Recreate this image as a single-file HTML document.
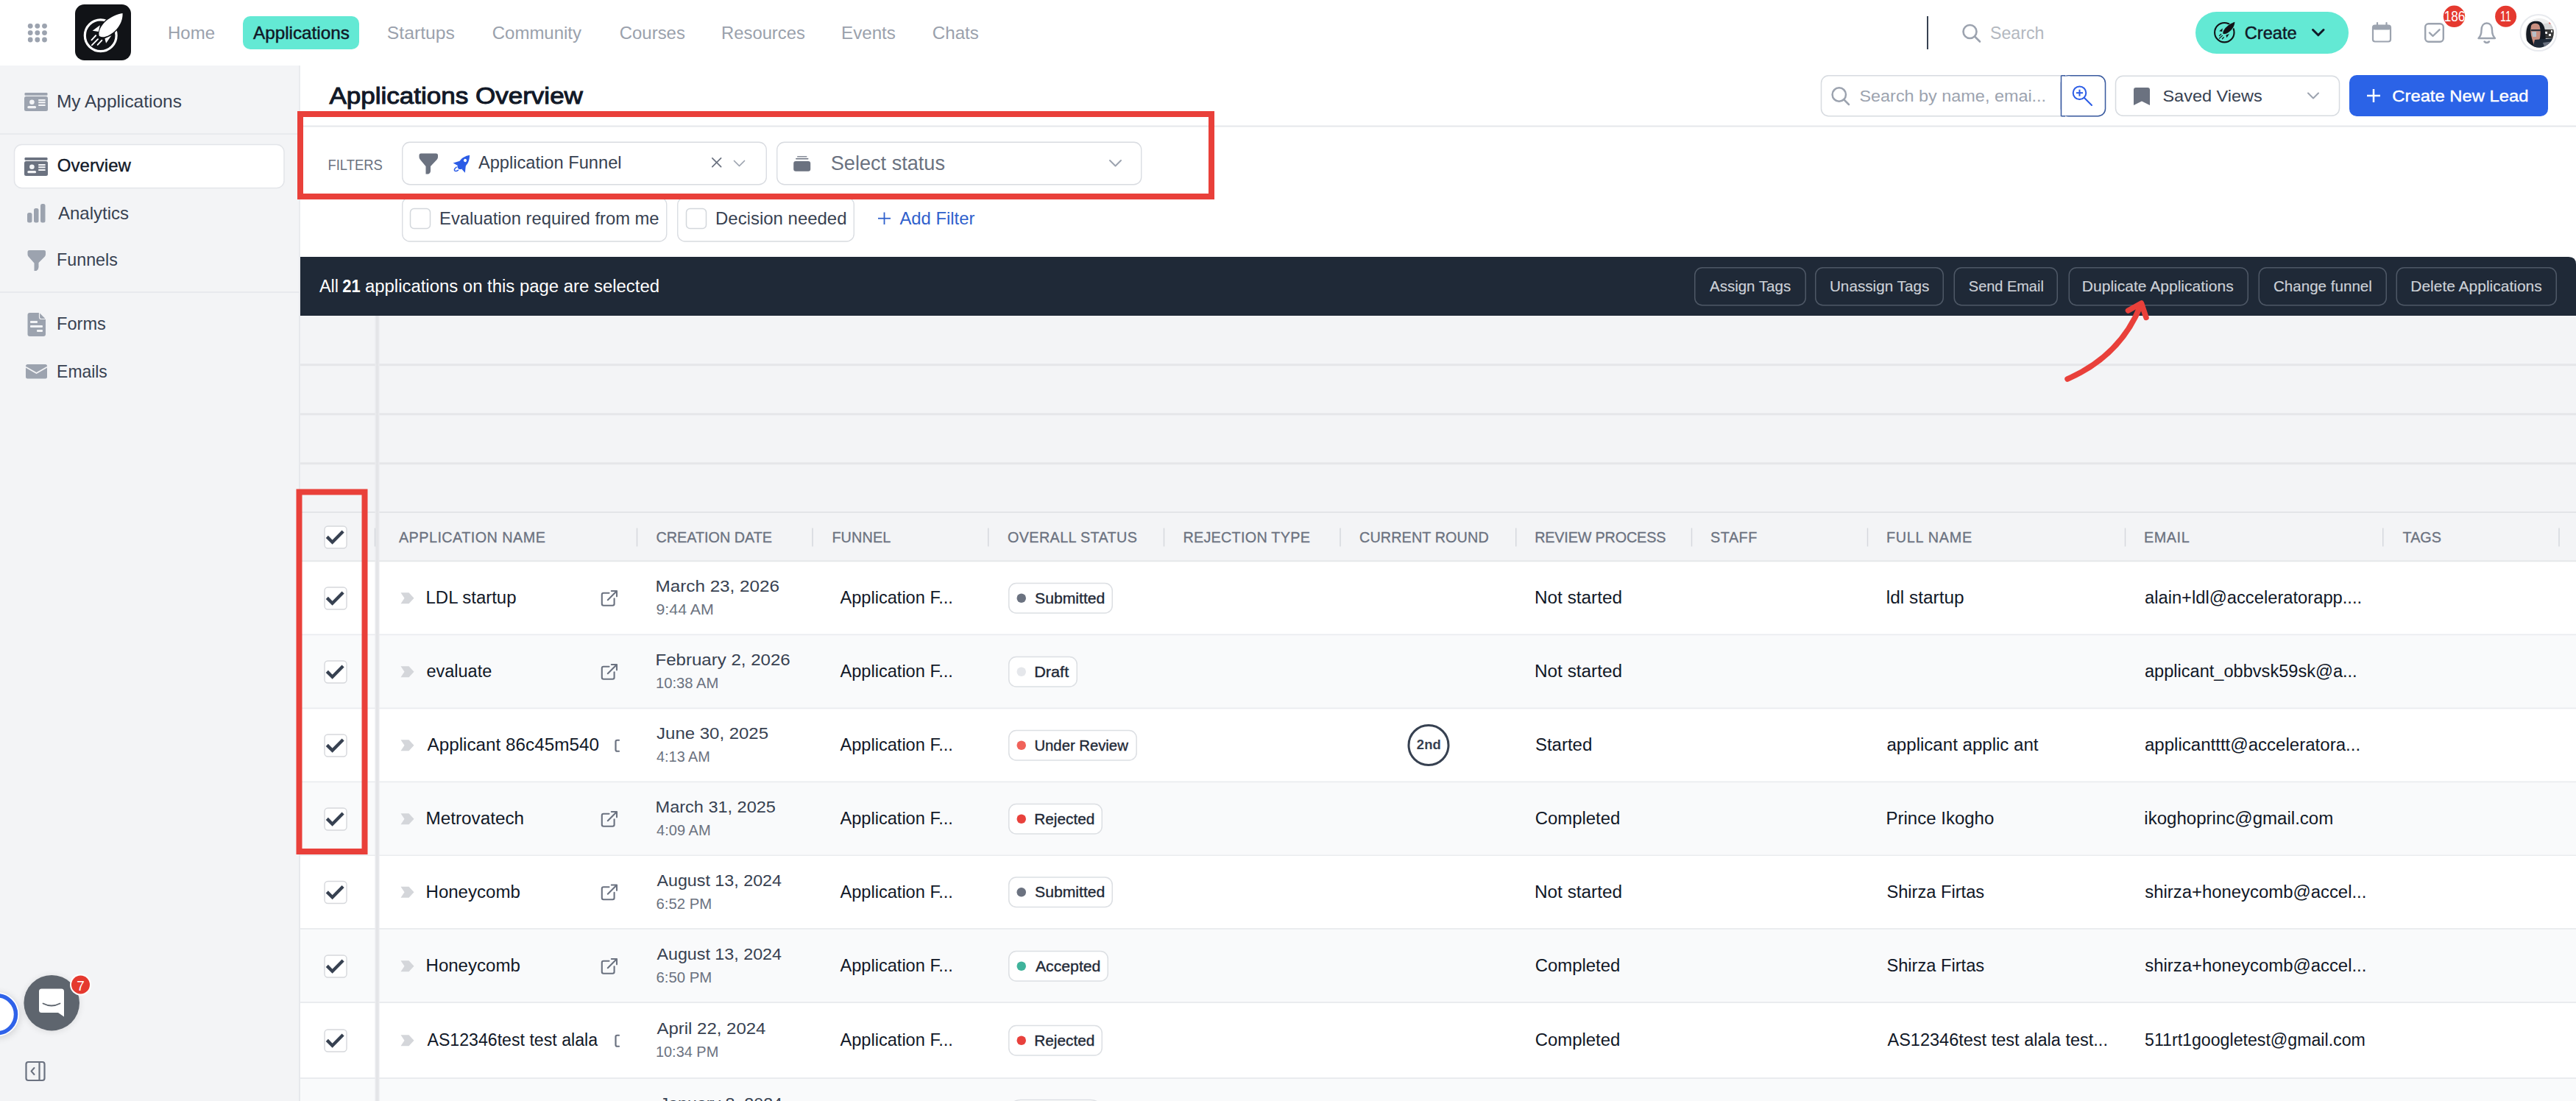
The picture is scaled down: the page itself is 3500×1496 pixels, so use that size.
<!DOCTYPE html>
<html><head><meta charset="utf-8"><title>Applications Overview</title>
<style>
html,body{margin:0;padding:0;background:#ffffff;width:3500px;height:1496px;overflow:hidden}
svg{display:block}
text{font-family:"Liberation Sans",sans-serif;white-space:pre}
</style></head><body>
<svg width="3500" height="1496" viewBox="0 0 3500 1496">
<rect x="0.00" y="0.00" width="3500.00" height="1496.00" fill="#ffffff"/>
<rect x="0.00" y="89.00" width="407.50" height="1407.00" fill="#f3f4f6"/>
<line x1="407.00" y1="89.00" x2="407.00" y2="1496.00" stroke="#e5e7eb" stroke-width="1.50" stroke-linecap="butt"/>
<line x1="408.00" y1="171.50" x2="3500.00" y2="171.50" stroke="#e5e7eb" stroke-width="2.00" stroke-linecap="butt"/>
<circle cx="41.20" cy="35.30" r="3.40" fill="#9ca3af"/>
<circle cx="41.20" cy="44.60" r="3.40" fill="#9ca3af"/>
<circle cx="41.20" cy="54.00" r="3.40" fill="#9ca3af"/>
<circle cx="50.80" cy="35.30" r="3.40" fill="#9ca3af"/>
<circle cx="50.80" cy="44.60" r="3.40" fill="#9ca3af"/>
<circle cx="50.80" cy="54.00" r="3.40" fill="#9ca3af"/>
<circle cx="60.50" cy="35.30" r="3.40" fill="#9ca3af"/>
<circle cx="60.50" cy="44.60" r="3.40" fill="#9ca3af"/>
<circle cx="60.50" cy="54.00" r="3.40" fill="#9ca3af"/>
<rect x="102.00" y="6.00" width="76.00" height="76.00" rx="12.50" fill="#111317"/>
<circle cx="136.70" cy="48.20" r="21.40" fill="none" stroke="#ffffff" stroke-width="3.20"/>
<path d="M134.66,48.24 C133.43,42.52 137.52,34.34 144.06,28.62 C150.60,22.89 159.60,18.81 166.55,17.99 C166.95,24.53 164.50,32.71 158.78,39.25 C152.24,46.61 144.06,50.70 139.15,50.29 C136.29,50.04 135.07,49.06 134.66,48.24 Z" fill="#ffffff" stroke="#111317" stroke-width="3.2" stroke-linejoin="round"/>
<path d="M134.66,48.24 C133.43,42.52 137.52,34.34 144.06,28.62 C150.60,22.89 159.60,18.81 166.55,17.99 C166.95,24.53 164.50,32.71 158.78,39.25 C152.24,46.61 144.06,50.70 139.15,50.29 C136.29,50.04 135.07,49.06 134.66,48.24 Z" fill="#ffffff"/>
<path d="M125.66,41.70 L135.88,34.34 L133.84,42.93 Z" fill="#ffffff"/>
<path d="M142.42,52.33 L151.42,48.24 L144.06,58.87 Z" fill="#ffffff"/>
<path d="M124.44,54.37 L130.16,48.24" fill="none" stroke="#ffffff" stroke-width="1.90" stroke-linecap="round" stroke-linejoin="round"/>
<path d="M124.84,61.32 L133.02,53.15" fill="none" stroke="#ffffff" stroke-width="1.90" stroke-linecap="round" stroke-linejoin="round"/>
<path d="M132.61,60.92 L138.34,54.78" fill="none" stroke="#ffffff" stroke-width="1.90" stroke-linecap="round" stroke-linejoin="round"/>
<text x="228.03" y="52.50" font-size="23.20" fill="#9aa1ac" textLength="64.04" lengthAdjust="spacingAndGlyphs">Home</text>
<rect x="330.00" y="22.00" width="158.00" height="45.00" rx="10.00" fill="#63e9d4"/>
<text x="343.95" y="52.50" font-size="23.20" fill="#111827" textLength="130.92" lengthAdjust="spacingAndGlyphs" stroke="#111827" stroke-width="0.45">Applications</text>
<text x="525.88" y="52.50" font-size="23.20" fill="#9aa1ac" textLength="92.01" lengthAdjust="spacingAndGlyphs">Startups</text>
<text x="668.78" y="52.50" font-size="23.20" fill="#9aa1ac" textLength="121.26" lengthAdjust="spacingAndGlyphs">Community</text>
<text x="841.79" y="52.50" font-size="23.20" fill="#9aa1ac" textLength="89.08" lengthAdjust="spacingAndGlyphs">Courses</text>
<text x="980.05" y="52.50" font-size="23.20" fill="#9aa1ac" textLength="113.81" lengthAdjust="spacingAndGlyphs">Resources</text>
<text x="1143.02" y="52.50" font-size="23.20" fill="#9aa1ac" textLength="73.85" lengthAdjust="spacingAndGlyphs">Events</text>
<text x="1266.77" y="52.50" font-size="23.20" fill="#9aa1ac" textLength="63.10" lengthAdjust="spacingAndGlyphs">Chats</text>
<line x1="2619.00" y1="22.00" x2="2619.00" y2="67.00" stroke="#374151" stroke-width="2.00" stroke-linecap="butt"/>
<circle cx="2676.50" cy="43.00" r="9.00" fill="none" stroke="#9ca3af" stroke-width="2.60"/>
<line x1="2683.00" y1="49.50" x2="2690.00" y2="56.50" stroke="#9ca3af" stroke-width="2.60" stroke-linecap="round"/>
<text x="2703.95" y="53.00" font-size="23.20" fill="#b3b8c0">Search</text>
<rect x="2983.00" y="16.00" width="208.00" height="57.00" rx="28.50" fill="#63e9d4"/>
<circle cx="3022.30" cy="44.20" r="13.20" fill="none" stroke="#111317" stroke-width="2.10"/>
<path d="M3020.30,45.40 C3020.16,40.86 3025.75,35.27 3031.34,32.12 C3034.13,30.51 3036.23,29.68 3036.37,29.68 C3036.23,35.27 3033.09,40.16 3027.84,44.00 C3024.35,46.45 3020.86,46.80 3020.30,45.40 Z" fill="#111317" stroke="#63e9d4" stroke-width="1.6" stroke-linejoin="round"/>
<path d="M3020.30,45.40 C3020.16,40.86 3025.75,35.27 3031.34,32.12 C3034.13,30.51 3036.23,29.68 3036.37,29.68 C3036.23,35.27 3033.09,40.16 3027.84,44.00 C3024.35,46.45 3020.86,46.80 3020.30,45.40 Z" fill="#111317"/>
<path d="M3015.27,42.25 L3019.81,38.41 L3019.11,42.95 Z" fill="#111317"/>
<path d="M3024.35,47.84 L3028.89,46.10 L3025.40,51.34 Z" fill="#111317"/>
<path d="M3015.41,48.68 L3017.71,46.45" fill="none" stroke="#111317" stroke-width="1.20" stroke-linecap="round" stroke-linejoin="round"/>
<path d="M3015.41,52.18 L3019.46,48.40" fill="none" stroke="#111317" stroke-width="1.20" stroke-linecap="round" stroke-linejoin="round"/>
<path d="M3019.46,52.74 L3021.42,50.78" fill="none" stroke="#111317" stroke-width="1.20" stroke-linecap="round" stroke-linejoin="round"/>
<text x="3049.70" y="52.70" font-size="23.80" fill="#111827" textLength="71.05" lengthAdjust="spacingAndGlyphs" stroke="#111827" stroke-width="0.45">Create</text>
<path d="M3142.5,40.5 L3149.8,47.8 L3157,40.5" fill="none" stroke="#111827" stroke-width="3.00" stroke-linecap="round" stroke-linejoin="round"/>
<rect x="3224.00" y="34.50" width="24.00" height="22.00" rx="3.00" fill="none" stroke="#9ca3af" stroke-width="2.20"/>
<rect x="3224.00" y="34.50" width="24.00" height="6.00" rx="2.50" fill="#9ca3af"/>
<line x1="3230.00" y1="31.00" x2="3230.00" y2="35.50" stroke="#9ca3af" stroke-width="2.20" stroke-linecap="round"/>
<line x1="3242.50" y1="31.00" x2="3242.50" y2="35.50" stroke="#9ca3af" stroke-width="2.20" stroke-linecap="round"/>
<rect x="3295.20" y="32.20" width="24.60" height="24.60" rx="4.50" fill="none" stroke="#9ca3af" stroke-width="2.40"/>
<path d="M3301,44.5 L3305.5,49 L3314.5,40.3" fill="none" stroke="#9ca3af" stroke-width="2.40" stroke-linecap="round" stroke-linejoin="round"/>
<circle cx="3334.50" cy="22.30" r="14.70" fill="#e5392f"/>
<text x="3320.69" y="28.80" font-size="19.50" fill="#ffffff" textLength="28.66" lengthAdjust="spacingAndGlyphs">186</text>
<path d="M3367.5,52 C3370.5,49 3371.5,45.5 3371.5,41 C3371.5,35 3374.5,31.5 3378.8,31.5 C3383,31.5 3386,35 3386,41 C3386,45.5 3387,49 3390,52 Z" fill="none" stroke="#9ca3af" stroke-width="2.40" stroke-linecap="round" stroke-linejoin="round"/>
<path d="M3375.5,56.5 Q3378.8,59.5 3382,56.5" fill="none" stroke="#9ca3af" stroke-width="2.40" stroke-linecap="round" stroke-linejoin="round"/>
<circle cx="3404.60" cy="22.30" r="14.50" fill="#e5392f"/>
<text x="3397.10" y="28.80" font-size="19.50" fill="#ffffff" textLength="14.65" lengthAdjust="spacingAndGlyphs">11</text>
<circle cx="3449.00" cy="44.60" r="24.50" fill="#ffffff" stroke="#e8eaee" stroke-width="2.00"/>
<defs><clipPath id="av"><circle cx="3450" cy="44.6" r="19.8"/></clipPath></defs>
<g clip-path="url(#av)"><rect x="3428" y="22" width="45" height="45" fill="#eeeeee"/><path d="M3452,33 L3470,30 L3470,45 L3455,44 Z" fill="#d8d8d8"/><rect x="3456" y="40" width="14" height="12" fill="#3a3a3a"/><rect x="3458" y="43" width="3" height="3" fill="#f5f5f5"/><rect x="3463" y="46" width="3" height="3" fill="#f0f0f0"/><rect x="3466" y="41" width="2" height="3" fill="#e8e8e8"/><circle cx="3465" cy="31" r="1.6" fill="#e53935"/><path d="M3436,64 C3432,55 3431,44 3434,36 C3437,29 3444,28 3449,29 C3454,30 3457,34 3458,42 L3459,56 L3452,66 Z" fill="#151a22"/><path d="M3439,35 C3441,31 3447,31 3450,34 C3452,38 3452,46 3451,52 C3449,57 3445,60 3443,62 L3440,52 C3438,46 3438,40 3439,35 Z" fill="#c98f80"/><rect x="3439" y="40" width="13" height="2.2" fill="#2a2f38"/><path d="M3440,43 L3446,43 L3446,50 L3441,50 Z" fill="#b9bec6"/><path d="M3444,54 L3470,52 L3470,70 L3440,70 Z" fill="#1f2a38"/><path d="M3455,58 L3470,56 L3470,66 L3458,66 Z" fill="#6b7280"/></g>
<rect x="33.50" y="126.00" width="31.00" height="3.70" rx="1.20" fill="#9ca3af"/>
<rect x="33.00" y="131.00" width="32.00" height="20.00" rx="2.50" fill="#9ca3af"/>
<circle cx="43.40" cy="138.70" r="3.30" fill="#f3f4f6"/>
<rect x="37.30" y="144.00" width="11.80" height="3.30" rx="1.60" fill="#f3f4f6"/>
<rect x="52.20" y="135.00" width="9.40" height="2.10" fill="#f3f4f6"/>
<rect x="52.20" y="138.20" width="9.40" height="2.10" fill="#f3f4f6"/>
<rect x="52.20" y="141.90" width="9.40" height="2.10" fill="#f3f4f6"/>
<text x="77.01" y="146.00" font-size="24.00" fill="#374151" textLength="169.87" lengthAdjust="spacingAndGlyphs">My Applications</text>
<line x1="0.00" y1="182.00" x2="407.00" y2="182.00" stroke="#e5e7eb" stroke-width="1.50" stroke-linecap="butt"/>
<rect x="19.50" y="196.50" width="366.50" height="59.00" rx="10.00" fill="#ffffff" stroke="#e3e5e9" stroke-width="1.50"/>
<rect x="33.50" y="214.00" width="31.00" height="3.70" rx="1.20" fill="#6b7280"/>
<rect x="33.00" y="219.00" width="32.00" height="20.00" rx="2.50" fill="#6b7280"/>
<circle cx="43.40" cy="226.70" r="3.30" fill="#f3f4f6"/>
<rect x="37.30" y="232.00" width="11.80" height="3.30" rx="1.60" fill="#f3f4f6"/>
<rect x="52.20" y="223.00" width="9.40" height="2.10" fill="#f3f4f6"/>
<rect x="52.20" y="226.20" width="9.40" height="2.10" fill="#f3f4f6"/>
<rect x="52.20" y="229.90" width="9.40" height="2.10" fill="#f3f4f6"/>
<text x="77.86" y="233.00" font-size="24.00" fill="#111827" stroke="#111827" stroke-width="0.35">Overview</text>
<rect x="37.00" y="289.00" width="6.50" height="13.50" rx="2.50" fill="#9ca3af"/>
<rect x="46.00" y="283.00" width="6.50" height="19.50" rx="2.50" fill="#9ca3af"/>
<rect x="55.00" y="277.00" width="6.50" height="25.50" rx="2.50" fill="#9ca3af"/>
<text x="78.95" y="297.50" font-size="24.00" fill="#374151">Analytics</text>
<path d="M37.5,342 Q37.5,340 40,340 L60,340 Q62,340 62,342 L62,345.5 Q62,347 61,348.5 L52.5,357 L52.5,363 Q52.5,366 49.5,368 L46.5,368 L46.5,357.5 L38.5,348.5 Q37.5,347 37.5,345.5 Z" fill="#9ca3af"/>
<text x="77.09" y="361.00" font-size="24.00" fill="#374151" textLength="82.75" lengthAdjust="spacingAndGlyphs">Funnels</text>
<line x1="0.00" y1="397.00" x2="407.00" y2="397.00" stroke="#e5e7eb" stroke-width="1.50" stroke-linecap="butt"/>
<path d="M37.5,428 Q37.5,425 40.5,425 L53.5,425 L62,433.5 L62,454 Q62,457 59,457 L40.5,457 Q37.5,457 37.5,454 Z" fill="#9ca3af"/>
<path d="M53.5,425 L53.5,431 Q53.5,433.5 56,433.5 L62,433.5" fill="none" stroke="#f3f4f6" stroke-width="1.20" stroke-linecap="round" stroke-linejoin="round"/>
<rect x="41.00" y="436.00" width="10.00" height="3.00" rx="1.00" fill="#f3f4f6"/>
<rect x="41.00" y="442.00" width="17.00" height="3.00" rx="1.00" fill="#f3f4f6"/>
<rect x="50.00" y="448.00" width="8.00" height="3.00" rx="1.00" fill="#f3f4f6"/>
<text x="77.07" y="448.00" font-size="24.00" fill="#374151" textLength="66.79" lengthAdjust="spacingAndGlyphs">Forms</text>
<rect x="35.00" y="495.00" width="29.00" height="19.50" rx="2.50" fill="#9ca3af"/>
<path d="M35.5,499 L49.5,507 L63.5,499" fill="none" stroke="#f3f4f6" stroke-width="1.80" stroke-linecap="round" stroke-linejoin="round"/>
<text x="77.12" y="512.50" font-size="24.00" fill="#374151" textLength="68.71" lengthAdjust="spacingAndGlyphs">Emails</text>
<defs><filter id="sh" x="-50%" y="-50%" width="200%" height="200%"><feGaussianBlur stdDeviation="5"/></filter></defs>
<circle cx="-3.00" cy="1380.00" r="31.00" fill="#000000" opacity="0.12" filter="url(#sh)"/>
<circle cx="-4.00" cy="1378.30" r="30.00" fill="#ffffff"/>
<circle cx="-4.00" cy="1378.30" r="25.50" fill="none" stroke="#2f62e9" stroke-width="5.50"/>
<circle cx="70.00" cy="1364.00" r="38.00" fill="#000000" opacity="0.10" filter="url(#sh)"/>
<circle cx="70.20" cy="1362.70" r="37.80" fill="#5e656e"/>
<path d="M56.5,1343.5 L83.5,1343.5 Q87,1343.5 87,1347 L87,1381.5 L79,1376 L56.5,1376 Q53,1376 53,1372.5 L53,1347 Q53,1343.5 56.5,1343.5 Z" fill="#ffffff"/>
<path d="M58.5,1363.5 Q70,1369.5 81.5,1363.5" fill="none" stroke="#5e656e" stroke-width="1.80" stroke-linecap="round" stroke-linejoin="round"/>
<circle cx="109.50" cy="1338.00" r="14.50" fill="#ffffff"/>
<circle cx="109.50" cy="1338.00" r="12.50" fill="#e5392f"/>
<text x="104.21" y="1345.50" font-size="19.00" fill="#ffffff">7</text>
<rect x="35.50" y="1443.00" width="25.00" height="25.00" rx="3.00" fill="none" stroke="#6b7280" stroke-width="2.20"/>
<line x1="53.50" y1="1443.00" x2="53.50" y2="1468.00" stroke="#6b7280" stroke-width="2.20" stroke-linecap="butt"/>
<path d="M46.5,1451 L42.5,1455.5 L46.5,1460" fill="none" stroke="#6b7280" stroke-width="2.00" stroke-linecap="round" stroke-linejoin="round"/>
<text x="447.43" y="141.00" font-size="31.00" fill="#111827" textLength="344.48" lengthAdjust="spacingAndGlyphs" stroke="#111827" stroke-width="1.00">Applications Overview</text>
<rect x="2474.50" y="102.75" width="386.00" height="55.00" rx="10.00" fill="#ffffff" stroke="#d7dbe0" stroke-width="1.50"/>
<rect x="2800.50" y="102.75" width="60.00" height="55.00" rx="10.00" fill="#ffffff" stroke="#3a5ba0" stroke-width="1.50"/>
<rect x="2800.5" y="103.5" width="12" height="53.5" fill="#ffffff"/>
<line x1="2800.50" y1="102.75" x2="2806.00" y2="102.75" stroke="#3a5ba0" stroke-width="1.50" stroke-linecap="butt"/>
<line x1="2800.50" y1="157.75" x2="2806.00" y2="157.75" stroke="#3a5ba0" stroke-width="1.50" stroke-linecap="butt"/>
<line x1="2800.50" y1="102.75" x2="2800.50" y2="157.75" stroke="#3a5ba0" stroke-width="1.50" stroke-linecap="butt"/>
<circle cx="2498.80" cy="128.50" r="9.20" fill="none" stroke="#9ca3af" stroke-width="2.50"/>
<line x1="2505.50" y1="135.50" x2="2512.00" y2="142.00" stroke="#9ca3af" stroke-width="2.50" stroke-linecap="round"/>
<text x="2526.44" y="137.50" font-size="22.50" fill="#9ca3af" textLength="253.70" lengthAdjust="spacingAndGlyphs">Search by name, emai...</text>
<circle cx="2825.50" cy="126.20" r="8.80" fill="none" stroke="#2b5ce6" stroke-width="2.00"/>
<line x1="2821.00" y1="126.20" x2="2830.00" y2="126.20" stroke="#2b5ce6" stroke-width="2.00" stroke-linecap="butt"/>
<line x1="2825.50" y1="121.70" x2="2825.50" y2="130.70" stroke="#2b5ce6" stroke-width="2.00" stroke-linecap="butt"/>
<line x1="2832.00" y1="133.00" x2="2842.00" y2="143.00" stroke="#2b5ce6" stroke-width="2.00" stroke-linecap="round"/>
<rect x="2874.50" y="103.25" width="304.00" height="54.00" rx="10.00" fill="#ffffff" stroke="#d7dbe0" stroke-width="1.50"/>
<path d="M2899,122 Q2899,119 2902,119 L2918,119 Q2921,119 2921,122 L2921,143 L2910,137.5 L2899,143 Z" fill="#6b7280"/>
<text x="2938.44" y="137.50" font-size="22.50" fill="#374151" textLength="135.41" lengthAdjust="spacingAndGlyphs">Saved Views</text>
<path d="M3136,126.5 L3143,133.5 L3150,126.5" fill="none" stroke="#9ca3af" stroke-width="2.00" stroke-linecap="round" stroke-linejoin="round"/>
<rect x="3192.00" y="102.00" width="270.00" height="56.00" rx="10.00" fill="#2b63e7"/>
<line x1="3225.00" y1="121.00" x2="3225.00" y2="139.00" stroke="#ffffff" stroke-width="2.50" stroke-linecap="butt"/>
<line x1="3216.00" y1="130.00" x2="3234.00" y2="130.00" stroke="#ffffff" stroke-width="2.50" stroke-linecap="butt"/>
<text x="3250.29" y="137.50" font-size="22.50" fill="#ffffff" textLength="185.24" lengthAdjust="spacingAndGlyphs" stroke="#ffffff" stroke-width="0.40">Create New Lead</text>
<text x="445.52" y="231.00" font-size="20.30" fill="#6b7280" textLength="74.31" lengthAdjust="spacingAndGlyphs">FILTERS</text>
<rect x="546.75" y="193.25" width="494.50" height="57.50" rx="10.00" fill="#ffffff" stroke="#d8dbe0" stroke-width="1.30"/>
<path d="M569.5,211 Q569.5,208.5 572,208.5 L592.5,208.5 Q595,208.5 595,211 L595,213.5 Q595,215 593.5,217 L585,226 L585,232 Q585,235 582,236.5 L578.5,236.5 L578.5,226 L571,217 Q569.5,215 569.5,213.5 Z" fill="#6b7280"/>
<g transform="translate(622.8,229.2) rotate(-50.6)"><path d="M0,0 C0,-5 9,-6 15,-4.8 C19.5,-3.5 22.5,-1.3 24,0 C22.5,1.3 19.5,3.5 15,4.8 C9,6 0,5 0,0 Z" fill="#2b5ce6"/><path d="M2.5,-3.8 L10,-4.8 L1.5,-10.5 Z M2.5,3.8 L10,4.8 L1.5,10.5 Z" fill="#2b5ce6"/><circle cx="14.5" cy="0" r="2.1" fill="#ffffff"/></g>
<path d="M620.2,227.2 Q616.6,229.6 617.6,231.8 Q619.3,233.6 622.6,231.2" fill="none" stroke="#2b5ce6" stroke-width="1.50" stroke-linecap="round" stroke-linejoin="round"/>
<text x="649.95" y="229.00" font-size="24.30" fill="#374151" textLength="194.63" lengthAdjust="spacingAndGlyphs">Application Funnel</text>
<line x1="967.80" y1="214.80" x2="979.60" y2="226.60" stroke="#6b7280" stroke-width="1.70" stroke-linecap="round"/>
<line x1="979.60" y1="214.80" x2="967.80" y2="226.60" stroke="#6b7280" stroke-width="1.70" stroke-linecap="round"/>
<path d="M997.5,218.5 L1004.5,225.5 L1011.5,218.5" fill="none" stroke="#9ca3af" stroke-width="1.70" stroke-linecap="round" stroke-linejoin="round"/>
<rect x="1055.75" y="193.25" width="495.00" height="57.50" rx="10.00" fill="#ffffff" stroke="#d8dbe0" stroke-width="1.30"/>
<rect x="1078.20" y="219.00" width="23.00" height="13.70" rx="3.00" fill="#6b7280"/>
<rect x="1081.00" y="215.00" width="17.50" height="1.60" rx="0.80" fill="#6b7280"/>
<rect x="1083.00" y="212.20" width="13.50" height="1.40" rx="0.70" fill="#6b7280"/>
<text x="1128.77" y="230.70" font-size="26.90" fill="#6b7280" textLength="155.21" lengthAdjust="spacingAndGlyphs">Select status</text>
<path d="M1508,218 L1515.5,225.5 L1523,218" fill="none" stroke="#9ca3af" stroke-width="2.00" stroke-linecap="round" stroke-linejoin="round"/>
<rect x="546.75" y="268.00" width="359.00" height="60.00" rx="10.00" fill="#ffffff" stroke="#d8dbe0" stroke-width="1.30"/>
<rect x="557.50" y="283.50" width="27.00" height="27.00" rx="5.00" fill="#ffffff" stroke="#d3d7dc" stroke-width="1.50"/>
<text x="597.05" y="305.00" font-size="24.50" fill="#374151" textLength="298.51" lengthAdjust="spacingAndGlyphs">Evaluation required from me</text>
<rect x="920.75" y="268.00" width="239.50" height="60.00" rx="10.00" fill="#ffffff" stroke="#d8dbe0" stroke-width="1.30"/>
<rect x="932.50" y="283.50" width="27.00" height="27.00" rx="5.00" fill="#ffffff" stroke="#d3d7dc" stroke-width="1.50"/>
<text x="972.03" y="305.00" font-size="24.50" fill="#374151" textLength="178.51" lengthAdjust="spacingAndGlyphs">Decision needed</text>
<line x1="1201.50" y1="288.50" x2="1201.50" y2="305.00" stroke="#2f60cc" stroke-width="1.80" stroke-linecap="butt"/>
<line x1="1193.00" y1="296.75" x2="1210.00" y2="296.75" stroke="#2f60cc" stroke-width="1.80" stroke-linecap="butt"/>
<text x="1222.45" y="305.00" font-size="24.50" fill="#2f60cc" textLength="101.94" lengthAdjust="spacingAndGlyphs">Add Filter</text>
<rect x="408.00" y="155.00" width="1238.00" height="112.00" fill="none" stroke="#e9403a" stroke-width="8.00"/>
<path d="M408,349 L3490,349 Q3500,349 3500,359 L3500,429 L408,429 Z" fill="#1f2937"/>
<text x="433.95" y="397.00" font-size="24.70" fill="#ffffff" textLength="26.12" lengthAdjust="spacingAndGlyphs">All</text>
<text x="465.24" y="397.00" font-size="24.70" fill="#ffffff" font-weight="700" textLength="24.37" lengthAdjust="spacingAndGlyphs">21</text>
<text x="495.98" y="397.00" font-size="24.70" fill="#ffffff" textLength="400.06" lengthAdjust="spacingAndGlyphs">applications on this page are selected</text>
<rect x="2302.75" y="363.75" width="150.50" height="51.00" rx="10.00" fill="none" stroke="#4e5866" stroke-width="1.50"/>
<text x="2322.96" y="396.00" font-size="21.00" fill="#cdd1d7" textLength="110.26" lengthAdjust="spacingAndGlyphs" stroke="#cdd1d7" stroke-width="0.15">Assign Tags</text>
<rect x="2466.75" y="363.75" width="173.50" height="51.00" rx="10.00" fill="none" stroke="#4e5866" stroke-width="1.50"/>
<text x="2485.94" y="396.00" font-size="21.00" fill="#cdd1d7" textLength="135.30" lengthAdjust="spacingAndGlyphs" stroke="#cdd1d7" stroke-width="0.15">Unassign Tags</text>
<rect x="2655.25" y="363.75" width="140.00" height="51.00" rx="10.00" fill="none" stroke="#4e5866" stroke-width="1.50"/>
<text x="2674.84" y="396.00" font-size="21.00" fill="#cdd1d7" textLength="101.99" lengthAdjust="spacingAndGlyphs" stroke="#cdd1d7" stroke-width="0.15">Send Email</text>
<rect x="2811.25" y="363.75" width="243.00" height="51.00" rx="10.00" fill="none" stroke="#4e5866" stroke-width="1.50"/>
<text x="2828.78" y="396.00" font-size="21.00" fill="#cdd1d7" textLength="205.97" lengthAdjust="spacingAndGlyphs" stroke="#cdd1d7" stroke-width="0.15">Duplicate Applications</text>
<rect x="3069.25" y="363.75" width="173.00" height="51.00" rx="10.00" fill="none" stroke="#4e5866" stroke-width="1.50"/>
<text x="3088.95" y="396.00" font-size="21.00" fill="#cdd1d7" textLength="133.92" lengthAdjust="spacingAndGlyphs" stroke="#cdd1d7" stroke-width="0.15">Change funnel</text>
<rect x="3256.25" y="363.75" width="217.00" height="51.00" rx="10.00" fill="none" stroke="#4e5866" stroke-width="1.50"/>
<text x="3275.29" y="396.00" font-size="21.00" fill="#cdd1d7" textLength="178.46" lengthAdjust="spacingAndGlyphs" stroke="#cdd1d7" stroke-width="0.15">Delete Applications</text>
<rect x="408.00" y="429.00" width="3092.00" height="333.00" fill="#f3f4f6"/>
<line x1="408.00" y1="495.75" x2="3500.00" y2="495.75" stroke="#e5e6e9" stroke-width="3.00" stroke-linecap="butt"/>
<line x1="408.00" y1="562.75" x2="3500.00" y2="562.75" stroke="#e5e6e9" stroke-width="3.00" stroke-linecap="butt"/>
<line x1="408.00" y1="629.75" x2="3500.00" y2="629.75" stroke="#e5e6e9" stroke-width="3.00" stroke-linecap="butt"/>
<line x1="406.75" y1="429.00" x2="406.75" y2="1496.00" stroke="#e5e7eb" stroke-width="1.50" stroke-linecap="butt"/>
<line x1="408.00" y1="696.00" x2="3500.00" y2="696.00" stroke="#e3e5e8" stroke-width="2.00" stroke-linecap="butt"/>
<line x1="408.00" y1="762.50" x2="3500.00" y2="762.50" stroke="#e3e5e8" stroke-width="2.00" stroke-linecap="butt"/>
<rect x="408.00" y="763.50" width="3092.00" height="99.00" fill="#ffffff"/>
<line x1="408.00" y1="862.50" x2="3500.00" y2="862.50" stroke="#eaecef" stroke-width="1.90" stroke-linecap="butt"/>
<rect x="408.00" y="863.50" width="3092.00" height="99.00" fill="#f9fafb"/>
<line x1="408.00" y1="962.50" x2="3500.00" y2="962.50" stroke="#eaecef" stroke-width="1.90" stroke-linecap="butt"/>
<rect x="408.00" y="963.50" width="3092.00" height="99.00" fill="#ffffff"/>
<line x1="408.00" y1="1062.50" x2="3500.00" y2="1062.50" stroke="#eaecef" stroke-width="1.90" stroke-linecap="butt"/>
<rect x="408.00" y="1063.50" width="3092.00" height="99.00" fill="#f9fafb"/>
<line x1="408.00" y1="1162.50" x2="3500.00" y2="1162.50" stroke="#eaecef" stroke-width="1.90" stroke-linecap="butt"/>
<rect x="408.00" y="1163.00" width="3092.00" height="99.00" fill="#ffffff"/>
<line x1="408.00" y1="1262.00" x2="3500.00" y2="1262.00" stroke="#eaecef" stroke-width="1.90" stroke-linecap="butt"/>
<rect x="408.00" y="1263.00" width="3092.00" height="99.00" fill="#f9fafb"/>
<line x1="408.00" y1="1362.00" x2="3500.00" y2="1362.00" stroke="#eaecef" stroke-width="1.90" stroke-linecap="butt"/>
<rect x="408.00" y="1363.00" width="3092.00" height="102.00" fill="#ffffff"/>
<line x1="408.00" y1="1465.00" x2="3500.00" y2="1465.00" stroke="#eaecef" stroke-width="1.90" stroke-linecap="butt"/>
<rect x="408.00" y="1466.00" width="3092.00" height="30.00" fill="#f9fafb"/>
<rect x="509.50" y="429.00" width="6.00" height="1067.00" fill="#e9eaed"/>
<rect x="511.00" y="429.00" width="3.00" height="1067.00" fill="#e4e5e8"/>
<rect x="441.00" y="715.00" width="30.00" height="30.00" rx="4.50" fill="#ffffff" stroke="#d6d8dc" stroke-width="1.40"/>
<path d="M444.30,729.40 L451.60,736.70 L466.10,722.00" fill="none" stroke="#374151" stroke-width="4.4" stroke-linecap="butt" stroke-linejoin="miter"/>
<text x="541.96" y="737.00" font-size="19.80" fill="#6b7280" textLength="198.89" lengthAdjust="spacing" stroke="#6b7280" stroke-width="0.30">APPLICATION NAME</text>
<text x="891.49" y="737.00" font-size="19.80" fill="#6b7280" stroke="#6b7280" stroke-width="0.30">CREATION DATE</text>
<text x="1130.38" y="737.00" font-size="19.80" fill="#6b7280" textLength="79.88" lengthAdjust="spacing" stroke="#6b7280" stroke-width="0.30">FUNNEL</text>
<text x="1369.06" y="737.00" font-size="19.80" fill="#6b7280" textLength="175.85" lengthAdjust="spacing" stroke="#6b7280" stroke-width="0.30">OVERALL STATUS</text>
<text x="1607.38" y="737.00" font-size="19.80" fill="#6b7280" textLength="172.48" lengthAdjust="spacing" stroke="#6b7280" stroke-width="0.30">REJECTION TYPE</text>
<text x="1846.99" y="737.00" font-size="19.80" fill="#6b7280" textLength="175.70" lengthAdjust="spacing" stroke="#6b7280" stroke-width="0.30">CURRENT ROUND</text>
<text x="2085.13" y="737.00" font-size="19.80" fill="#6b7280" textLength="178.28" lengthAdjust="spacing" stroke="#6b7280" stroke-width="0.30">REVIEW PROCESS</text>
<text x="2324.10" y="737.00" font-size="19.80" fill="#6b7280" textLength="63.19" lengthAdjust="spacing" stroke="#6b7280" stroke-width="0.30">STAFF</text>
<text x="2562.88" y="737.00" font-size="19.80" fill="#6b7280" textLength="116.23" lengthAdjust="spacing" stroke="#6b7280" stroke-width="0.30">FULL NAME</text>
<text x="2912.88" y="737.00" font-size="19.80" fill="#6b7280" textLength="61.78" lengthAdjust="spacing" stroke="#6b7280" stroke-width="0.30">EMAIL</text>
<text x="3264.56" y="737.00" font-size="19.80" fill="#6b7280" textLength="52.35" lengthAdjust="spacing" stroke="#6b7280" stroke-width="0.30">TAGS</text>
<line x1="509.50" y1="717.50" x2="509.50" y2="742.50" stroke="#d5d8dd" stroke-width="1.50" stroke-linecap="butt"/>
<line x1="865.50" y1="717.50" x2="865.50" y2="742.50" stroke="#d5d8dd" stroke-width="1.50" stroke-linecap="butt"/>
<line x1="1104.00" y1="717.50" x2="1104.00" y2="742.50" stroke="#d5d8dd" stroke-width="1.50" stroke-linecap="butt"/>
<line x1="1342.75" y1="717.50" x2="1342.75" y2="742.50" stroke="#d5d8dd" stroke-width="1.50" stroke-linecap="butt"/>
<line x1="1581.50" y1="717.50" x2="1581.50" y2="742.50" stroke="#d5d8dd" stroke-width="1.50" stroke-linecap="butt"/>
<line x1="1821.00" y1="717.50" x2="1821.00" y2="742.50" stroke="#d5d8dd" stroke-width="1.50" stroke-linecap="butt"/>
<line x1="2059.75" y1="717.50" x2="2059.75" y2="742.50" stroke="#d5d8dd" stroke-width="1.50" stroke-linecap="butt"/>
<line x1="2298.50" y1="717.50" x2="2298.50" y2="742.50" stroke="#d5d8dd" stroke-width="1.50" stroke-linecap="butt"/>
<line x1="2537.50" y1="717.50" x2="2537.50" y2="742.50" stroke="#d5d8dd" stroke-width="1.50" stroke-linecap="butt"/>
<line x1="2887.50" y1="717.50" x2="2887.50" y2="742.50" stroke="#d5d8dd" stroke-width="1.50" stroke-linecap="butt"/>
<line x1="3237.75" y1="717.50" x2="3237.75" y2="742.50" stroke="#d5d8dd" stroke-width="1.50" stroke-linecap="butt"/>
<line x1="3477.00" y1="717.50" x2="3477.00" y2="742.50" stroke="#d5d8dd" stroke-width="1.50" stroke-linecap="butt"/>
<rect x="441.00" y="798.00" width="30.00" height="30.00" rx="4.50" fill="#ffffff" stroke="#d6d8dc" stroke-width="1.40"/>
<path d="M444.30,812.40 L451.60,819.70 L466.10,805.00" fill="none" stroke="#374151" stroke-width="4.4" stroke-linecap="butt" stroke-linejoin="miter"/>
<path d="M544.5,805.25 L555.5,805.25 L562.5,812.75 L555.5,820.25 L544.5,820.25 L549.5,812.75 Z" fill="#d4d6da"/>
<text x="578.55" y="820.00" font-size="23.30" fill="#111827" textLength="122.95" lengthAdjust="spacingAndGlyphs">LDL startup</text>
<path d="M827.5,805.75 L820,805.75 Q817.8,805.75 817.8,807.95 L817.8,820.50 Q817.8,822.70 820,822.70 L832.4,822.70 Q834.6,822.70 834.6,820.50 L834.6,813.35" fill="none" stroke="#6b7280" stroke-width="2.10" stroke-linecap="round" stroke-linejoin="round"/>
<path d="M830.8,803.00 L838,803.00 L838,810.35 M838,803.00 L825.8,815.25" fill="none" stroke="#6b7280" stroke-width="2.10" stroke-linecap="round" stroke-linejoin="round"/>
<text x="890.51" y="804.00" font-size="21.80" fill="#374151" textLength="168.56" lengthAdjust="spacingAndGlyphs">March 23, 2026</text>
<text x="891.52" y="835.00" font-size="20.30" fill="#6b7280" textLength="78.21" lengthAdjust="spacingAndGlyphs">9:44 AM</text>
<text x="1141.45" y="820.00" font-size="23.60" fill="#111827">Application F...</text>
<rect x="1370.75" y="792.50" width="140.50" height="40.50" rx="10.00" fill="#ffffff" stroke="#dcdfe3" stroke-width="1.50"/>
<circle cx="1387.75" cy="812.75" r="6.25" fill="#6b7280"/>
<text x="1406.04" y="819.75" font-size="20.30" fill="#1f2937" textLength="95.33" lengthAdjust="spacingAndGlyphs" stroke="#1f2937" stroke-width="0.35">Submitted</text>
<text x="2085.00" y="820.00" font-size="23.30" fill="#111827" textLength="119.07" lengthAdjust="spacingAndGlyphs">Not started</text>
<text x="2562.86" y="820.00" font-size="23.30" fill="#111827" textLength="105.67" lengthAdjust="spacingAndGlyphs">ldl startup</text>
<text x="2913.99" y="820.00" font-size="23.30" fill="#111827" textLength="295.17" lengthAdjust="spacingAndGlyphs">alain+ldl@acceleratorapp....</text>
<rect x="441.00" y="898.00" width="30.00" height="30.00" rx="4.50" fill="#ffffff" stroke="#d6d8dc" stroke-width="1.40"/>
<path d="M444.30,912.40 L451.60,919.70 L466.10,905.00" fill="none" stroke="#374151" stroke-width="4.4" stroke-linecap="butt" stroke-linejoin="miter"/>
<path d="M544.5,905.25 L555.5,905.25 L562.5,912.75 L555.5,920.25 L544.5,920.25 L549.5,912.75 Z" fill="#d4d6da"/>
<text x="579.50" y="920.00" font-size="23.30" fill="#111827" textLength="88.74" lengthAdjust="spacingAndGlyphs">evaluate</text>
<path d="M827.5,905.75 L820,905.75 Q817.8,905.75 817.8,907.95 L817.8,920.50 Q817.8,922.70 820,922.70 L832.4,922.70 Q834.6,922.70 834.6,920.50 L834.6,913.35" fill="none" stroke="#6b7280" stroke-width="2.10" stroke-linecap="round" stroke-linejoin="round"/>
<path d="M830.8,903.00 L838,903.00 L838,910.35 M838,903.00 L825.8,915.25" fill="none" stroke="#6b7280" stroke-width="2.10" stroke-linecap="round" stroke-linejoin="round"/>
<text x="890.53" y="904.00" font-size="21.80" fill="#374151" textLength="183.13" lengthAdjust="spacingAndGlyphs">February 2, 2026</text>
<text x="890.98" y="935.00" font-size="20.30" fill="#6b7280" textLength="85.46" lengthAdjust="spacingAndGlyphs">10:38 AM</text>
<text x="1141.45" y="920.00" font-size="23.60" fill="#111827">Application F...</text>
<rect x="1370.75" y="892.50" width="92.50" height="40.50" rx="10.00" fill="#ffffff" stroke="#dcdfe3" stroke-width="1.50"/>
<circle cx="1387.75" cy="912.75" r="6.25" fill="#e5e7eb"/>
<text x="1405.22" y="919.75" font-size="20.30" fill="#1f2937" textLength="46.94" lengthAdjust="spacingAndGlyphs" stroke="#1f2937" stroke-width="0.35">Draft</text>
<text x="2085.00" y="920.00" font-size="23.30" fill="#111827" textLength="119.07" lengthAdjust="spacingAndGlyphs">Not started</text>
<text x="2914.00" y="920.00" font-size="23.30" fill="#111827" textLength="288.65" lengthAdjust="spacingAndGlyphs">applicant_obbvsk59sk@a...</text>
<rect x="441.00" y="998.00" width="30.00" height="30.00" rx="4.50" fill="#ffffff" stroke="#d6d8dc" stroke-width="1.40"/>
<path d="M444.30,1012.40 L451.60,1019.70 L466.10,1005.00" fill="none" stroke="#374151" stroke-width="4.4" stroke-linecap="butt" stroke-linejoin="miter"/>
<path d="M544.5,1005.25 L555.5,1005.25 L562.5,1012.75 L555.5,1020.25 L544.5,1020.25 L549.5,1012.75 Z" fill="#d4d6da"/>
<text x="580.45" y="1020.00" font-size="23.30" fill="#111827" textLength="233.50" lengthAdjust="spacingAndGlyphs">Applicant 86c45m540</text>
<path d="M841,1005.75 L838.5,1005.75 Q836.5,1005.75 836.5,1007.75 L836.5,1018.75 Q836.5,1020.75 838.5,1020.75 L841,1020.75" fill="none" stroke="#6b7280" stroke-width="2.20" stroke-linecap="round" stroke-linejoin="round"/>
<text x="892.13" y="1004.00" font-size="21.80" fill="#374151" textLength="151.88" lengthAdjust="spacingAndGlyphs">June 30, 2025</text>
<text x="892.05" y="1035.00" font-size="20.30" fill="#6b7280" textLength="72.85" lengthAdjust="spacingAndGlyphs">4:13 AM</text>
<text x="1141.45" y="1020.00" font-size="23.60" fill="#111827">Application F...</text>
<rect x="1370.75" y="992.50" width="173.40" height="40.50" rx="10.00" fill="#ffffff" stroke="#dcdfe3" stroke-width="1.50"/>
<circle cx="1387.75" cy="1012.75" r="6.25" fill="#f0625a"/>
<text x="1405.43" y="1019.75" font-size="20.30" fill="#1f2937" stroke="#1f2937" stroke-width="0.35">Under Review</text>
<circle cx="1941.00" cy="1012.50" r="27.00" fill="none" stroke="#374151" stroke-width="3.00"/>
<text x="1924.86" y="1018.30" font-size="17.60" fill="#374151" font-weight="700" textLength="32.86" lengthAdjust="spacingAndGlyphs">2nd</text>
<text x="2085.91" y="1020.00" font-size="23.30" fill="#111827" textLength="77.39" lengthAdjust="spacingAndGlyphs">Started</text>
<text x="2563.48" y="1020.00" font-size="23.30" fill="#111827" textLength="206.10" lengthAdjust="spacingAndGlyphs">applicant applic ant</text>
<text x="2913.98" y="1020.00" font-size="23.30" fill="#111827" textLength="293.12" lengthAdjust="spacingAndGlyphs">applicantttt@acceleratora...</text>
<rect x="441.00" y="1098.00" width="30.00" height="30.00" rx="4.50" fill="#ffffff" stroke="#d6d8dc" stroke-width="1.40"/>
<path d="M444.30,1112.40 L451.60,1119.70 L466.10,1105.00" fill="none" stroke="#374151" stroke-width="4.4" stroke-linecap="butt" stroke-linejoin="miter"/>
<path d="M544.5,1105.25 L555.5,1105.25 L562.5,1112.75 L555.5,1120.25 L544.5,1120.25 L549.5,1112.75 Z" fill="#d4d6da"/>
<text x="578.51" y="1120.00" font-size="23.30" fill="#111827" textLength="133.57" lengthAdjust="spacingAndGlyphs">Metrovatech</text>
<path d="M827.5,1105.75 L820,1105.75 Q817.8,1105.75 817.8,1107.95 L817.8,1120.50 Q817.8,1122.70 820,1122.70 L832.4,1122.70 Q834.6,1122.70 834.6,1120.50 L834.6,1113.35" fill="none" stroke="#6b7280" stroke-width="2.10" stroke-linecap="round" stroke-linejoin="round"/>
<path d="M830.8,1103.00 L838,1103.00 L838,1110.35 M838,1103.00 L825.8,1115.25" fill="none" stroke="#6b7280" stroke-width="2.10" stroke-linecap="round" stroke-linejoin="round"/>
<text x="890.57" y="1104.00" font-size="21.80" fill="#374151" textLength="163.31" lengthAdjust="spacingAndGlyphs">March 31, 2025</text>
<text x="892.05" y="1135.00" font-size="20.30" fill="#6b7280" textLength="73.57" lengthAdjust="spacingAndGlyphs">4:09 AM</text>
<text x="1141.45" y="1120.00" font-size="23.60" fill="#111827">Application F...</text>
<rect x="1370.75" y="1092.50" width="126.50" height="40.50" rx="10.00" fill="#ffffff" stroke="#dcdfe3" stroke-width="1.50"/>
<circle cx="1387.75" cy="1112.75" r="6.25" fill="#e8413c"/>
<text x="1405.29" y="1119.75" font-size="20.30" fill="#1f2937" textLength="82.05" lengthAdjust="spacingAndGlyphs" stroke="#1f2937" stroke-width="0.35">Rejected</text>
<text x="2085.79" y="1120.00" font-size="23.30" fill="#111827" textLength="115.50" lengthAdjust="spacingAndGlyphs">Completed</text>
<text x="2562.53" y="1120.00" font-size="23.30" fill="#111827" textLength="146.78" lengthAdjust="spacingAndGlyphs">Prince Ikogho</text>
<text x="2913.39" y="1120.00" font-size="23.30" fill="#111827" textLength="256.89" lengthAdjust="spacingAndGlyphs">ikoghoprinc@gmail.com</text>
<rect x="441.00" y="1197.50" width="30.00" height="30.00" rx="4.50" fill="#ffffff" stroke="#d6d8dc" stroke-width="1.40"/>
<path d="M444.30,1211.90 L451.60,1219.20 L466.10,1204.50" fill="none" stroke="#374151" stroke-width="4.4" stroke-linecap="butt" stroke-linejoin="miter"/>
<path d="M544.5,1204.75 L555.5,1204.75 L562.5,1212.25 L555.5,1219.75 L544.5,1219.75 L549.5,1212.25 Z" fill="#d4d6da"/>
<text x="578.53" y="1219.50" font-size="23.30" fill="#111827" textLength="128.28" lengthAdjust="spacingAndGlyphs">Honeycomb</text>
<path d="M827.5,1205.25 L820,1205.25 Q817.8,1205.25 817.8,1207.45 L817.8,1220.00 Q817.8,1222.20 820,1222.20 L832.4,1222.20 Q834.6,1222.20 834.6,1220.00 L834.6,1212.85" fill="none" stroke="#6b7280" stroke-width="2.10" stroke-linecap="round" stroke-linejoin="round"/>
<path d="M830.8,1202.50 L838,1202.50 L838,1209.85 M838,1202.50 L825.8,1214.75" fill="none" stroke="#6b7280" stroke-width="2.10" stroke-linecap="round" stroke-linejoin="round"/>
<text x="892.45" y="1203.50" font-size="21.80" fill="#374151" textLength="169.53" lengthAdjust="spacingAndGlyphs">August 13, 2024</text>
<text x="891.47" y="1234.50" font-size="20.30" fill="#6b7280" textLength="75.80" lengthAdjust="spacingAndGlyphs">6:52 PM</text>
<text x="1141.45" y="1219.50" font-size="23.60" fill="#111827">Application F...</text>
<rect x="1370.75" y="1192.00" width="140.50" height="40.50" rx="10.00" fill="#ffffff" stroke="#dcdfe3" stroke-width="1.50"/>
<circle cx="1387.75" cy="1212.25" r="6.25" fill="#6b7280"/>
<text x="1406.04" y="1219.25" font-size="20.30" fill="#1f2937" textLength="95.33" lengthAdjust="spacingAndGlyphs" stroke="#1f2937" stroke-width="0.35">Submitted</text>
<text x="2085.00" y="1219.50" font-size="23.30" fill="#111827" textLength="119.07" lengthAdjust="spacingAndGlyphs">Not started</text>
<text x="2563.43" y="1219.50" font-size="23.30" fill="#111827" textLength="132.73" lengthAdjust="spacingAndGlyphs">Shirza Firtas</text>
<text x="2914.34" y="1219.50" font-size="23.30" fill="#111827" textLength="301.05" lengthAdjust="spacingAndGlyphs">shirza+honeycomb@accel...</text>
<rect x="441.00" y="1298.00" width="30.00" height="30.00" rx="4.50" fill="#ffffff" stroke="#d6d8dc" stroke-width="1.40"/>
<path d="M444.30,1312.40 L451.60,1319.70 L466.10,1305.00" fill="none" stroke="#374151" stroke-width="4.4" stroke-linecap="butt" stroke-linejoin="miter"/>
<path d="M544.5,1305.25 L555.5,1305.25 L562.5,1312.75 L555.5,1320.25 L544.5,1320.25 L549.5,1312.75 Z" fill="#d4d6da"/>
<text x="578.53" y="1320.00" font-size="23.30" fill="#111827" textLength="128.28" lengthAdjust="spacingAndGlyphs">Honeycomb</text>
<path d="M827.5,1305.75 L820,1305.75 Q817.8,1305.75 817.8,1307.95 L817.8,1320.50 Q817.8,1322.70 820,1322.70 L832.4,1322.70 Q834.6,1322.70 834.6,1320.50 L834.6,1313.35" fill="none" stroke="#6b7280" stroke-width="2.10" stroke-linecap="round" stroke-linejoin="round"/>
<path d="M830.8,1303.00 L838,1303.00 L838,1310.35 M838,1303.00 L825.8,1315.25" fill="none" stroke="#6b7280" stroke-width="2.10" stroke-linecap="round" stroke-linejoin="round"/>
<text x="892.45" y="1304.00" font-size="21.80" fill="#374151" textLength="169.53" lengthAdjust="spacingAndGlyphs">August 13, 2024</text>
<text x="891.47" y="1335.00" font-size="20.30" fill="#6b7280" textLength="75.80" lengthAdjust="spacingAndGlyphs">6:50 PM</text>
<text x="1141.45" y="1320.00" font-size="23.60" fill="#111827">Application F...</text>
<rect x="1370.75" y="1292.50" width="134.50" height="40.50" rx="10.00" fill="#ffffff" stroke="#dcdfe3" stroke-width="1.50"/>
<circle cx="1387.75" cy="1312.75" r="6.25" fill="#3fb39b"/>
<text x="1406.96" y="1319.75" font-size="20.30" fill="#1f2937" textLength="88.41" lengthAdjust="spacingAndGlyphs" stroke="#1f2937" stroke-width="0.35">Accepted</text>
<text x="2085.79" y="1320.00" font-size="23.30" fill="#111827" textLength="115.50" lengthAdjust="spacingAndGlyphs">Completed</text>
<text x="2563.43" y="1320.00" font-size="23.30" fill="#111827" textLength="132.73" lengthAdjust="spacingAndGlyphs">Shirza Firtas</text>
<text x="2914.34" y="1320.00" font-size="23.30" fill="#111827" textLength="301.05" lengthAdjust="spacingAndGlyphs">shirza+honeycomb@accel...</text>
<rect x="441.00" y="1399.00" width="30.00" height="30.00" rx="4.50" fill="#ffffff" stroke="#d6d8dc" stroke-width="1.40"/>
<path d="M444.30,1413.40 L451.60,1420.70 L466.10,1406.00" fill="none" stroke="#374151" stroke-width="4.4" stroke-linecap="butt" stroke-linejoin="miter"/>
<path d="M544.5,1406.25 L555.5,1406.25 L562.5,1413.75 L555.5,1421.25 L544.5,1421.25 L549.5,1413.75 Z" fill="#d4d6da"/>
<text x="580.45" y="1421.00" font-size="23.30" fill="#111827" textLength="231.65" lengthAdjust="spacingAndGlyphs">AS12346test test alala</text>
<path d="M841,1406.75 L838.5,1406.75 Q836.5,1406.75 836.5,1408.75 L836.5,1419.75 Q836.5,1421.75 838.5,1421.75 L841,1421.75" fill="none" stroke="#6b7280" stroke-width="2.20" stroke-linecap="round" stroke-linejoin="round"/>
<text x="892.45" y="1405.00" font-size="21.80" fill="#374151" textLength="147.95" lengthAdjust="spacingAndGlyphs">April 22, 2024</text>
<text x="890.98" y="1436.00" font-size="20.30" fill="#6b7280" textLength="85.25" lengthAdjust="spacingAndGlyphs">10:34 PM</text>
<text x="1141.45" y="1421.00" font-size="23.60" fill="#111827">Application F...</text>
<rect x="1370.75" y="1393.50" width="126.50" height="40.50" rx="10.00" fill="#ffffff" stroke="#dcdfe3" stroke-width="1.50"/>
<circle cx="1387.75" cy="1413.75" r="6.25" fill="#e8413c"/>
<text x="1405.29" y="1420.75" font-size="20.30" fill="#1f2937" textLength="82.05" lengthAdjust="spacingAndGlyphs" stroke="#1f2937" stroke-width="0.35">Rejected</text>
<text x="2085.79" y="1421.00" font-size="23.30" fill="#111827" textLength="115.50" lengthAdjust="spacingAndGlyphs">Completed</text>
<text x="2564.45" y="1421.00" font-size="23.30" fill="#111827" textLength="299.49" lengthAdjust="spacingAndGlyphs">AS12346test test alala test...</text>
<text x="2914.08" y="1421.00" font-size="23.30" fill="#111827" textLength="299.74" lengthAdjust="spacingAndGlyphs">511rt1googletest@gmail.com</text>
<rect x="441.00" y="1501.25" width="30.00" height="30.00" rx="4.50" fill="#ffffff" stroke="#d6d8dc" stroke-width="1.40"/>
<path d="M444.30,1515.65 L451.60,1522.95 L466.10,1508.25" fill="none" stroke="#374151" stroke-width="4.4" stroke-linecap="butt" stroke-linejoin="miter"/>
<text x="896.64" y="1507.25" font-size="21.80" fill="#374151" textLength="166.34" lengthAdjust="spacingAndGlyphs">January 8, 2024</text>
<rect x="1376.75" y="1494.50" width="115.00" height="10.00" rx="10.00" fill="#ffffff" stroke="#dcdfe3" stroke-width="1.50"/>
<rect x="406.50" y="668.50" width="89.00" height="488.50" fill="none" stroke="#e9403a" stroke-width="8.00"/>
<path d="M2809,515 C2848,498 2886,470 2908,416" fill="none" stroke="#e9403a" stroke-width="7.50" stroke-linecap="round" stroke-linejoin="round"/>
<path d="M2891.5,422 L2909.5,412 L2916,431.5" fill="none" stroke="#e9403a" stroke-width="7.50" stroke-linecap="round" stroke-linejoin="round"/>
</svg>
</body></html>
